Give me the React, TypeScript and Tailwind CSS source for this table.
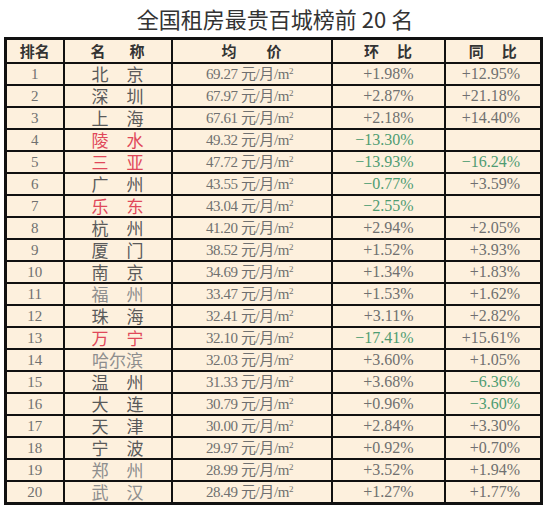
const rows: { rank: number; name: string; nameColor?: string; price: string; hb: string; tb: string }[] = [
  { rank: 1, name: '北京', price: '69.27', hb: '+1.98%', tb: '+12.95%' },
  { rank: 2, name: '深圳', price: '67.97', hb: '+2.87%', tb: '+21.18%' },
  { rank: 3, name: '上海', price: '67.61', hb: '+2.18%', tb: '+14.40%' },
  { rank: 4, name: '陵水', nameColor: 'red', price: '49.32', hb: '−13.30%', tb: '' },
  { rank: 5, name: '三亚', nameColor: 'red', price: '47.72', hb: '−13.93%', tb: '−16.24%' },
  { rank: 6, name: '广州', price: '43.55', hb: '−0.77%', tb: '+3.59%' },
  { rank: 7, name: '乐东', nameColor: 'red', price: '43.04', hb: '−2.55%', tb: '' },
  { rank: 8, name: '杭州', price: '41.20', hb: '+2.94%', tb: '+2.05%' },
  { rank: 9, name: '厦门', price: '38.52', hb: '+1.52%', tb: '+3.93%' },
  { rank: 10, name: '南京', price: '34.69', hb: '+1.34%', tb: '+1.83%' },
  { rank: 11, name: '福州', nameColor: 'light', price: '33.47', hb: '+1.53%', tb: '+1.62%' },
  { rank: 12, name: '珠海', price: '32.41', hb: '+3.11%', tb: '+2.82%' },
  { rank: 13, name: '万宁', nameColor: 'red', price: '32.10', hb: '−17.41%', tb: '+15.61%' },
  { rank: 14, name: '哈尔滨', nameColor: 'light', price: '32.03', hb: '+3.60%', tb: '+1.05%' },
  { rank: 15, name: '温州', price: '31.33', hb: '+3.68%', tb: '−6.36%' },
  { rank: 16, name: '大连', price: '30.79', hb: '+0.96%', tb: '−3.60%' },
  { rank: 17, name: '天津', price: '30.00', hb: '+2.84%', tb: '+3.30%' },
  { rank: 18, name: '宁波', price: '29.97', hb: '+0.92%', tb: '+0.70%' },
  { rank: 19, name: '郑州', nameColor: 'light', price: '28.99', hb: '+3.52%', tb: '+1.94%' },
  { rank: 20, name: '武汉', nameColor: 'light', price: '28.49', hb: '+1.27%', tb: '+1.77%' },
];

const serif = "font-['Liberation_Serif','Noto_Sans_CJK_SC',serif]";
const cjk = "font-['Noto_Sans_CJK_SC',sans-serif]";
const cell = 'border-2 border-[#111] p-0';

function pct(v: string) {
  const neg = v.startsWith('−');
  return <span className={neg ? 'text-[#4f9c72]' : 'text-[#707070]'}>{v}</span>;
}

function nameColor(c?: string) {
  if (c === 'red') return 'text-[#e0485a]';
  if (c === 'light') return 'text-[#8e8e8e]';
  return 'text-[#5a5a5a]';
}

export default function App() {
  return (
    <div className="w-[550px] h-[509px] bg-white overflow-hidden">
      <h1 className={`${cjk} text-center text-[22px] leading-[37px] h-[37px] text-[#333]`}>
        全国租房最贵百城榜前 20 名
      </h1>

      <table className="ml-[4px] w-[539px] table-fixed border-collapse border-[3px] border-[#111] bg-[#fdf0dd]">
        <colgroup>
          <col className="w-[58px]" />
          <col className="w-[108px]" />
          <col className="w-[160px]" />
          <col className="w-[113px]" />
          <col />
        </colgroup>
        <thead>
          <tr className={`${cjk} text-[15px] font-bold text-[#333]`}>
            <th className={cell}>
              <div className="h-[22px] leading-[22px] text-center">排名</div>
            </th>
            <th className={cell}>
              <div className="h-[22px] leading-[22px] text-center tracking-[24px] pl-[24px]">名称</div>
            </th>
            <th className={cell}>
              <div className="h-[22px] leading-[22px] text-center tracking-[30px] pl-[30px]">均价</div>
            </th>
            <th className={cell}>
              <div className="h-[22px] leading-[22px] text-center tracking-[18px] pl-[18px]">环比</div>
            </th>
            <th className={cell}>
              <div className="h-[22px] leading-[22px] text-center tracking-[18px] pl-[18px]">同比</div>
            </th>
          </tr>
        </thead>
        <tbody>
          {rows.map((r) => (
            <tr key={r.rank} className="text-[#707070]">
              <td className={cell}>
                <div className={`h-[20px] leading-[20px] text-center ${serif} text-[15px]`}>{r.rank}</div>
              </td>
              <td className={cell}>
                {r.name.length === 2 ? (
                  <div className={`h-[20px] flex items-center justify-center gap-[18px] ${cjk} text-[17px] ${nameColor(r.nameColor)}`}>
                    <span className="h-[20px] leading-[20px]">{r.name[0]}</span>
                    <span className="h-[20px] leading-[20px]">{r.name[1]}</span>
                  </div>
                ) : (
                  <div className={`h-[20px] leading-[20px] text-center ${cjk} text-[17px] ${nameColor(r.nameColor)}`}>
                    {r.name}
                  </div>
                )}
              </td>
              <td className={cell}>
                <div className={`h-[20px] leading-[20px] text-center pr-[4px] ${serif} text-[15px] tracking-[-0.4px] whitespace-pre`}>
                  {r.price} 元/月/m<span className="relative -top-[5px] text-[9px] leading-none">2</span>
                </div>
              </td>
              <td className={cell}>
                <div className={`h-[20px] leading-[20px] text-right pr-[30px] ${serif} text-[16px]`}>{pct(r.hb)}</div>
              </td>
              <td className={cell}>
                <div className={`h-[20px] leading-[20px] text-right pr-[20px] ${serif} text-[16px]`}>
                  {r.tb ? pct(r.tb) : null}
                </div>
              </td>
            </tr>
          ))}
        </tbody>
      </table>
    </div>
  );
}
